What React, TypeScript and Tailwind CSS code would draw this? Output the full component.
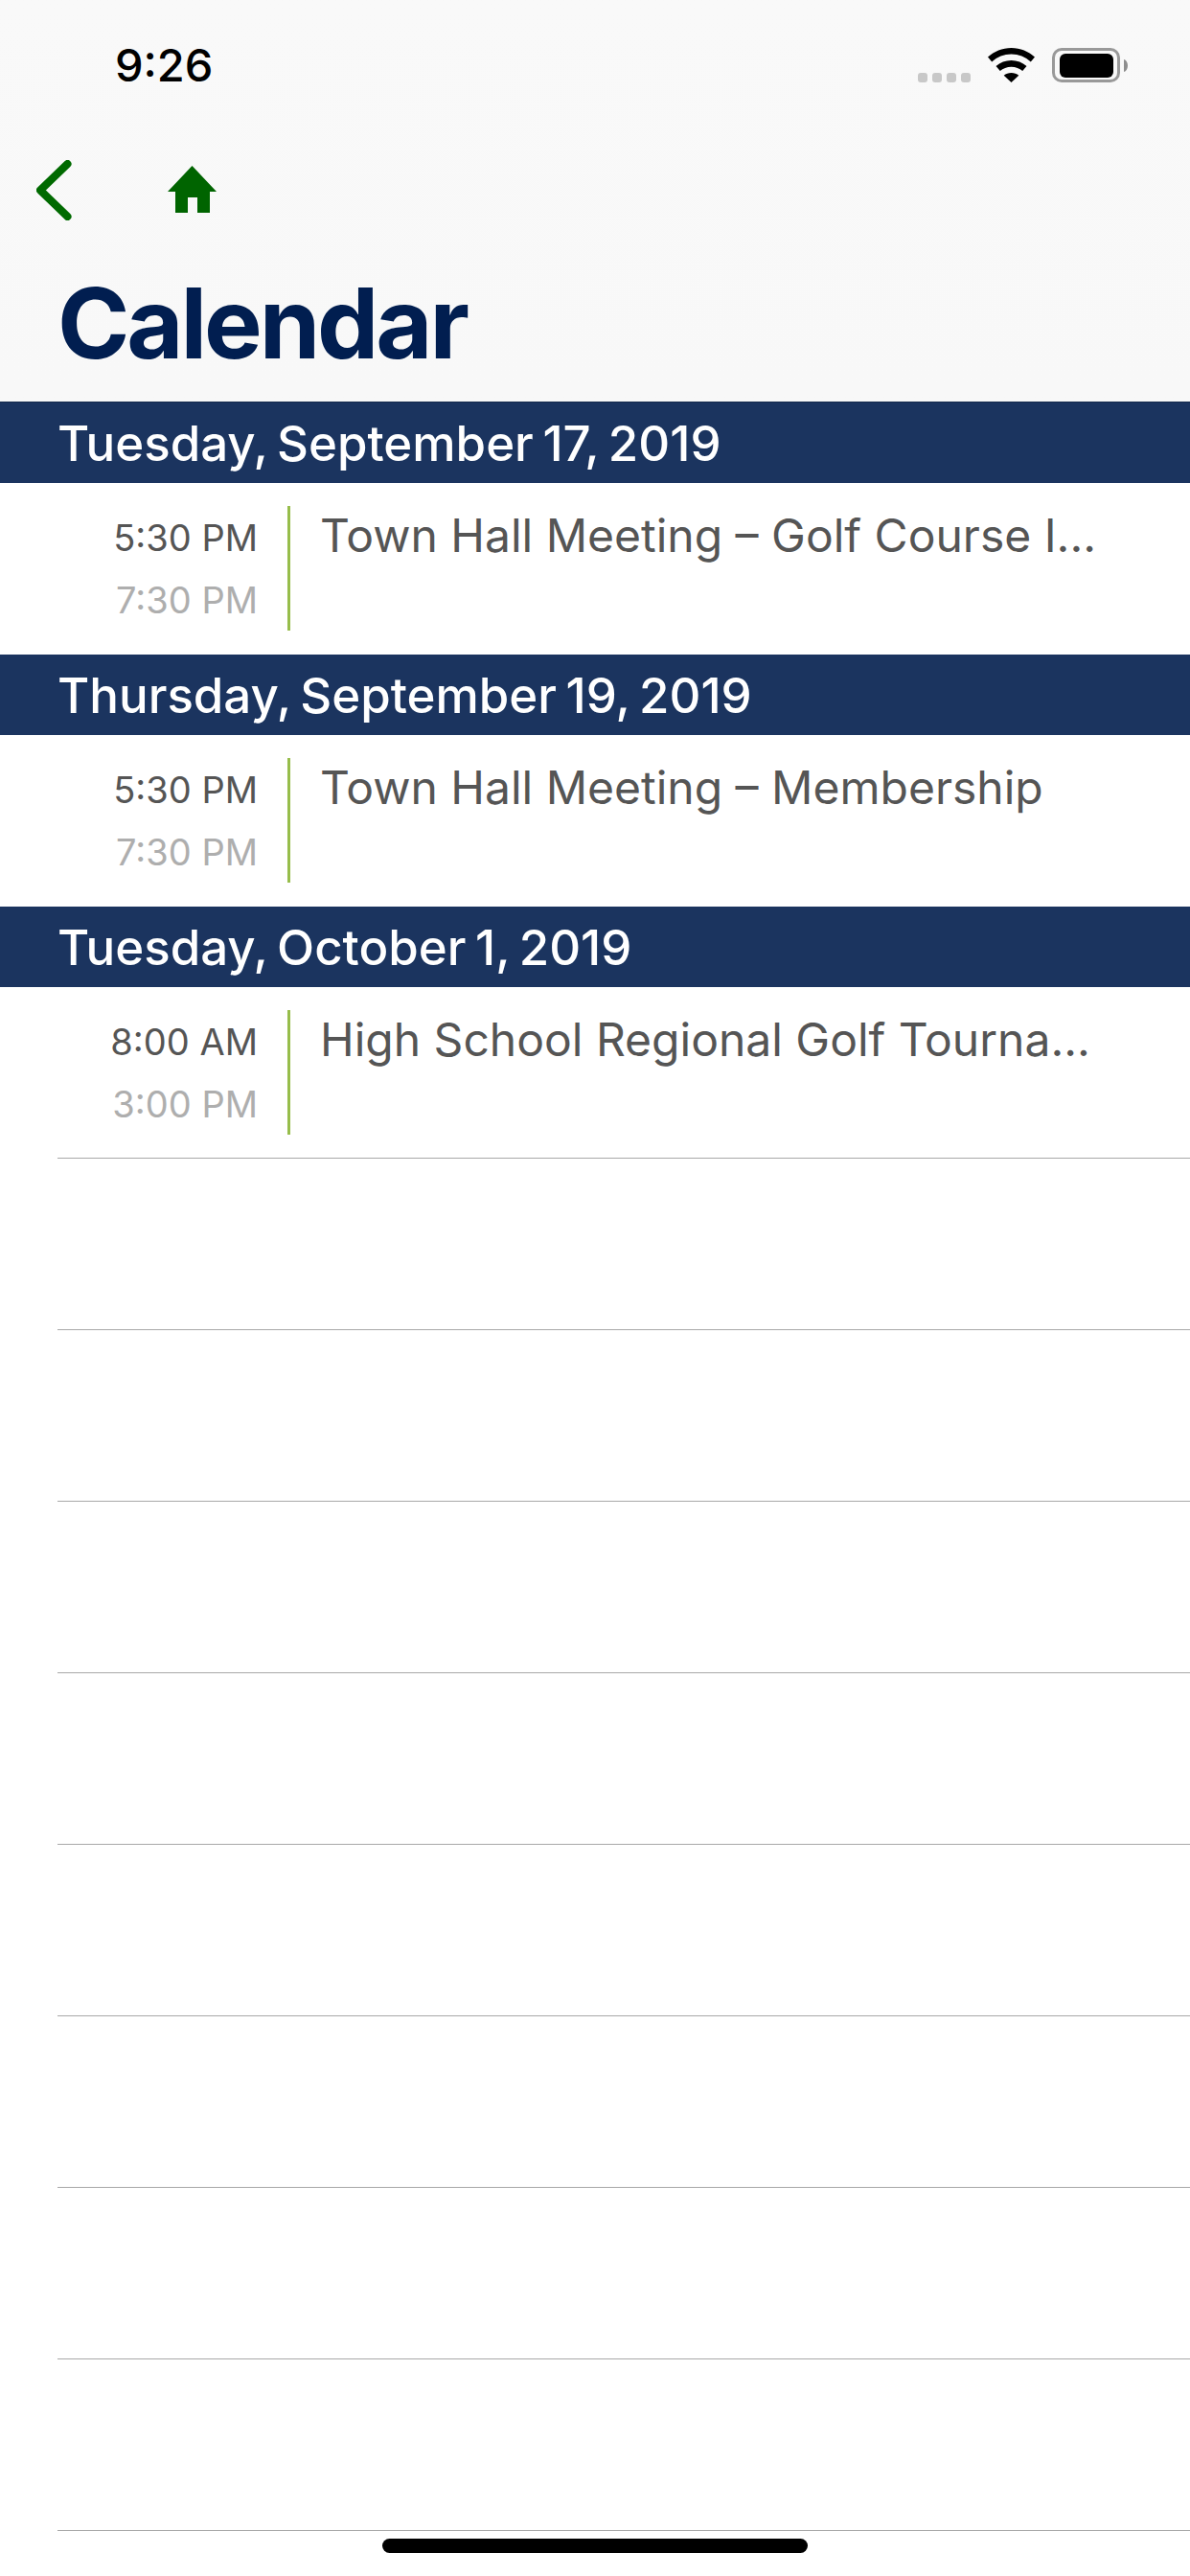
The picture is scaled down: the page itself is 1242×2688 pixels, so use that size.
const FONT = "font-['Inter','Noto_Sans',sans-serif]";

type CalEvent = { start: string; end: string; title: string };
type Day = { date: string; events: CalEvent[] };

const DAYS: Day[] = [
  {
    date: "Tuesday, September 17, 2019",
    events: [{ start: "5:30 PM", end: "7:30 PM", title: "Town Hall Meeting – Golf Course I..." }],
  },
  {
    date: "Thursday, September 19, 2019",
    events: [{ start: "5:30 PM", end: "7:30 PM", title: "Town Hall Meeting – Membership" }],
  },
  {
    date: "Tuesday, October 1, 2019",
    events: [{ start: "8:00 AM", end: "3:00 PM", title: "High School Regional Golf Tourna..." }],
  },
];

function StatusIcons() {
  return (
    <div className="flex items-center">
      <div className="mt-[26px] flex gap-[5px]">
        {[0, 1, 2, 3].map((i) => (
          <span key={i} className="h-[10px] w-[10px] rounded-[3px] bg-[#c8c8c8]" />
        ))}
      </div>
      {/* wifi */}
      <svg className="ml-[18px]" width="49" height="36" viewBox="0 0 49 36">
        <path
          d="M24.5 0C15 0 6.6 3.6 0 9.5l4.2 5C9.8 9.6 16.8 6.6 24.5 6.6s14.7 3 20.3 7.9l4.2-5C42.4 3.6 34 0 24.5 0z"
          fill="#000"
        />
        <path
          d="M24.5 13c-6 0-11.6 2.2-16 6l4.3 5.1c3.1-2.7 7.2-4.3 11.7-4.3s8.6 1.6 11.7 4.3l4.3-5.1c-4.4-3.8-10-6-16-6z"
          fill="#000"
        />
        <path d="M24.5 26c-3 0-5.7 1-7.8 2.8L24.5 36l7.8-7.2C30.2 27 27.5 26 24.5 26z" fill="#000" />
      </svg>
      {/* battery */}
      <div className="ml-[18px] flex items-center">
        <div className="flex h-[36px] w-[71px] items-center justify-center rounded-[10px] border-[3px] border-[#999999]">
          <div className="h-[25px] w-[56px] rounded-[6px] bg-black" />
        </div>
        <svg className="ml-[4px]" width="4" height="13" viewBox="0 0 4 13">
          <path d="M0 0c2.4.6 4 3.2 4 6.5S2.4 12.4 0 13z" fill="#8e8e8e" />
        </svg>
      </div>
    </div>
  );
}

function Header() {
  return (
    <header className="h-[420px] border-b border-[#15294c] bg-gradient-to-b from-[#f9f9f9] to-[#f8f8f8]">
      <div className="flex h-[167px] items-start justify-between pl-[120px] pr-[65px] pt-[50px]">
        <span className="text-[47px] leading-[36px] font-[550] text-black">9:26</span>
        <StatusIcons />
      </div>
      <div className="flex items-center pl-[38px]">
        <svg width="37" height="63" viewBox="0 0 37 63" fill="none">
          <path d="M32.5 4 4 31.5 32.5 59" stroke="#006a00" strokeWidth="8" strokeLinecap="round" strokeLinejoin="round" />
        </svg>
        <svg className="mb-[2px] ml-[100px]" width="51" height="49" viewBox="0 0 51 49">
          <path d="M25.5 0 51 27h-7v22H31V33H21v16H8V27H0z" fill="#006400" />
        </svg>
      </div>
      <h1 className="mt-[47px] pl-[60px] text-[102px] leading-[120px] font-bold tracking-[-3.1px] text-[#011e50]">
        Calendar
      </h1>
    </header>
  );
}

function EventRow({ event }: { event: CalEvent }) {
  return (
    <div className="flex h-[179px] pt-[24px]">
      <div className="w-[269px] pt-[1px] text-right text-[38px] leading-[65px]">
        <div className="text-[#555555]">{event.start}</div>
        <div className="text-[#aeaeae]">{event.end}</div>
      </div>
      <div className="ml-[31px] h-[130px] w-[3px] bg-[#97bd4b]" />
      <div className="ml-[31px] text-[48px] leading-[62px] text-[#555555]">{event.title}</div>
    </div>
  );
}

export default function App() {
  return (
    <div className={`relative h-[2688px] w-[1242px] overflow-hidden bg-white ${FONT}`}>
      <Header />
      {DAYS.map((d) => (
        <section key={d.date}>
          <div className="flex h-[84px] items-center bg-[#1b345f] pl-[60px] pt-[2px] text-[51px] font-[550] whitespace-pre-wrap text-white [word-spacing:-4px]">
            {d.date}
          </div>
          {d.events.map((e) => (
            <EventRow key={e.title} event={e} />
          ))}
        </section>
      ))}
      <div className="ml-[60px] -mt-[1px]">
        {[0, 1, 2, 3, 4, 5, 6, 7, 8].map((i) => (
          <div key={i} className={`border-b border-[#a8a8a8] ${i === 0 ? "h-[1px]" : "h-[179px]"}`} />
        ))}
      </div>
      <div className="absolute left-[399px] top-[2649px] h-[15px] w-[444px] rounded-full bg-black" />
    </div>
  );
}
